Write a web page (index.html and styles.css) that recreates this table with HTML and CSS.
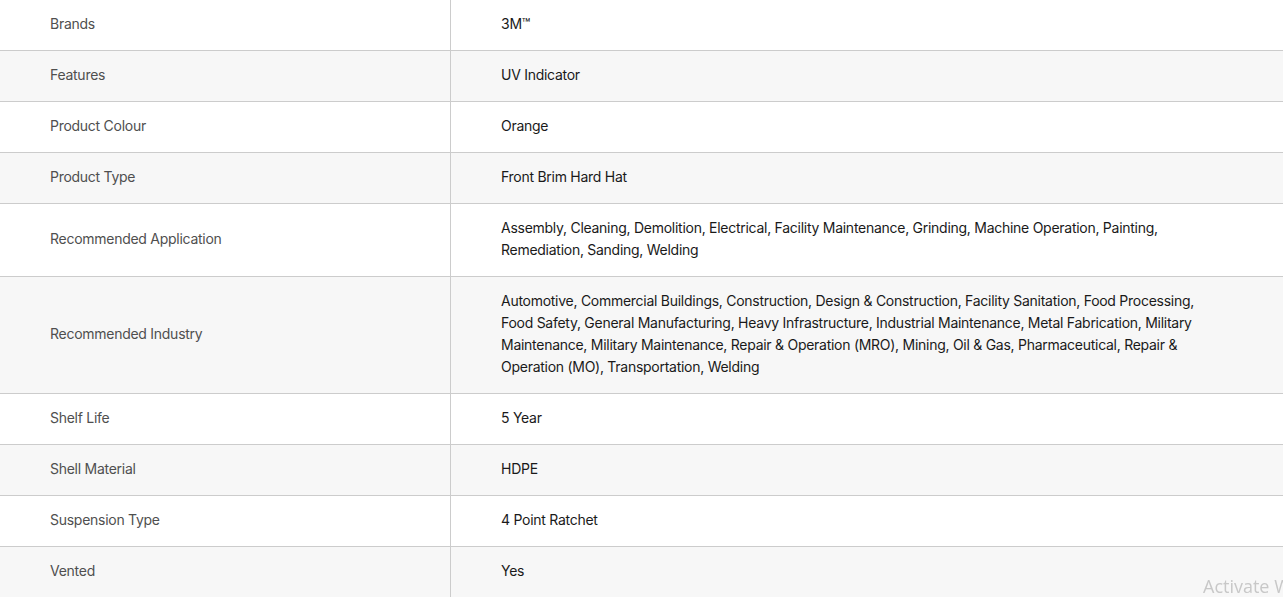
FILE: index.html
```html
<!DOCTYPE html>
<html lang="en">
<head>
<meta charset="utf-8">
<title>Specifications</title>
<link rel="stylesheet" href="styles.css">
</head>
<body>
<table class="specs">
  <tbody>
    <tr><th>Brands</th><td>3M™</td></tr>
    <tr><th>Features</th><td>UV Indicator</td></tr>
    <tr><th>Product Colour</th><td>Orange</td></tr>
    <tr><th>Product Type</th><td>Front Brim Hard Hat</td></tr>
    <tr><th>Recommended Application</th><td>Assembly, Cleaning, Demolition, Electrical, Facility Maintenance, Grinding, Machine Operation, Painting, Remediation, Sanding, Welding</td></tr>
    <tr><th>Recommended Industry</th><td>Automotive, Commercial Buildings, Construction, Design &amp; Construction, Facility Sanitation, Food Processing, Food Safety, General Manufacturing, Heavy Infrastructure, Industrial Maintenance, Metal Fabrication, Military Maintenance, Military Maintenance, Repair &amp; Operation (MRO), Mining, Oil &amp; Gas, Pharmaceutical, Repair &amp; Operation (MO), Transportation, Welding</td></tr>
    <tr><th>Shelf Life</th><td>5 Year</td></tr>
    <tr><th>Shell Material</th><td>HDPE</td></tr>
    <tr><th>Suspension Type</th><td>4 Point Ratchet</td></tr>
    <tr><th>Vented</th><td>Yes</td></tr>
  </tbody>
</table>
<div class="watermark">Activate Windows</div>
</body>
</html>
```

FILE: styles.css
```css
html, body {
  margin: 0;
  padding: 0;
  background: #ffffff;
  overflow: hidden;
}
.specs {
  width: 100%;
  border-collapse: collapse;
  font-family: "Inter", "Liberation Sans", sans-serif;
  font-size: 14px;
  line-height: 22px;
  letter-spacing: -0.27px;
}
.specs tr {
  border-bottom: 1px solid #cccccc;
}
.specs tr:nth-child(even) {
  background: #f7f7f7;
}
.specs th {
  width: 400px;
  padding: 13px 0 15px 50px;
  text-align: left;
  font-weight: 400;
  color: #4f4f4f;
  border-right: 1px solid #cccccc;
  vertical-align: middle;
}
.specs td {
  padding: 13px 68px 15px 50px;
  color: #1a1a1a;
  vertical-align: middle;
}
.watermark {
  position: fixed;
  left: 1203px;
  top: 574px;
  white-space: nowrap;
  font-family: "Open Sans", "DejaVu Sans", sans-serif;
  font-size: 18px;
  color: #c8c8c8;
}
```
